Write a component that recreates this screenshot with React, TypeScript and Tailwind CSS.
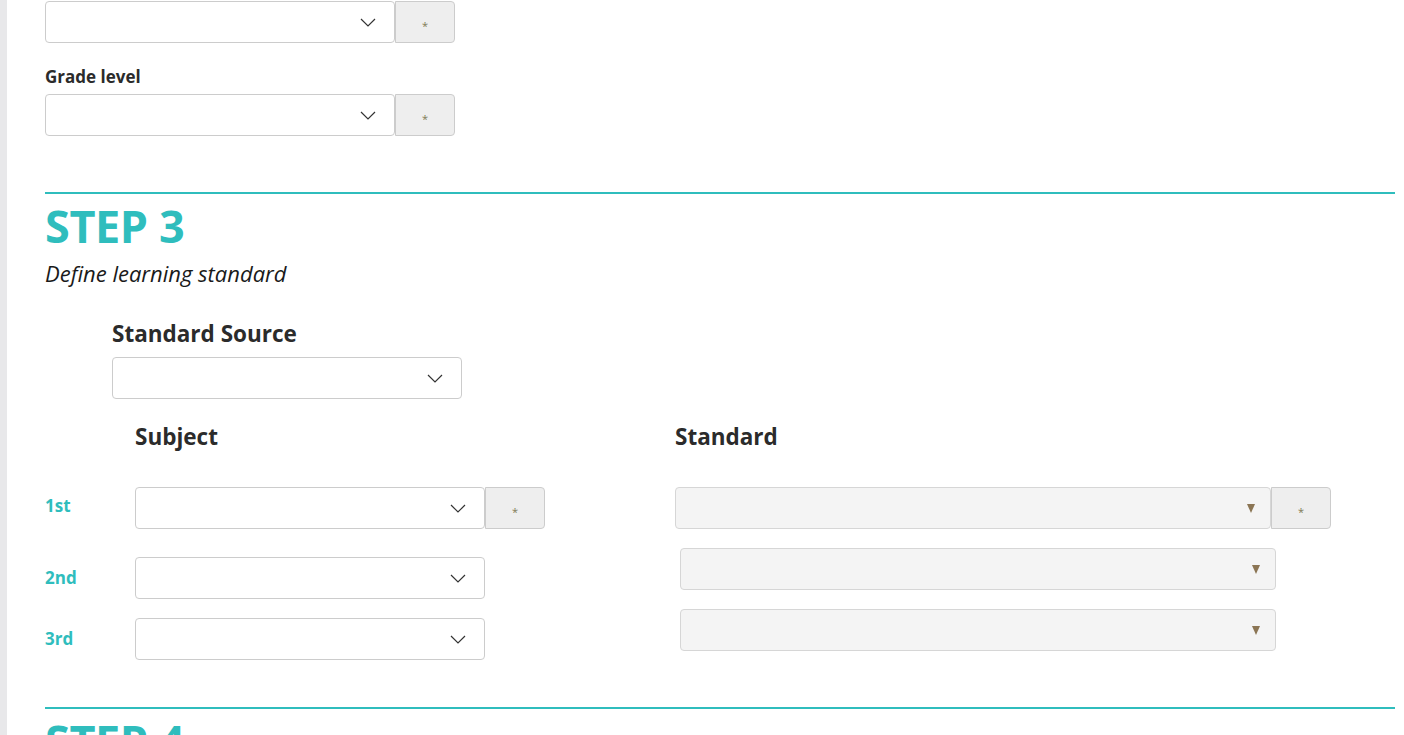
import React from "react";

const font = { fontFamily: '"Open Sans", "Noto Sans", sans-serif' };

function Chevron() {
  return (
    <svg width="16" height="9" viewBox="0 0 16 9" className="shrink-0">
      <polyline points="1,1 8,8 15,1" fill="none" stroke="#333" strokeWidth="1.2" />
    </svg>
  );
}

function Select({ w = "w-[350px]" }: { w?: string }) {
  return (
    <div className={`${w} h-[42px] bg-white border border-[#cccccc] rounded-[4px] flex items-center justify-end pr-[18px]`}>
      <Chevron />
    </div>
  );
}

function Star() {
  return (
    <div className="w-[60px] h-[42px] bg-[#eeeeee] border border-[#cccccc] rounded-r-[4px] flex items-center justify-center pt-[6px]">
      <span className="text-[11px] leading-none text-[#7f7a55]">*</span>
    </div>
  );
}

function SelectWithStar() {
  return (
    <div className="flex">
      <Select />
      <Star />
    </div>
  );
}

function GraySelect({ withStar = false }: { withStar?: boolean }) {
  return (
    <div className="flex">
      <div className="w-[596px] h-[42px] bg-[#f4f4f4] border border-[#d6d6d6] rounded-[4px] flex items-center justify-end pr-[15px]">
        <svg width="8" height="9" viewBox="0 0 8 9">
          <polygon points="0,0 8,0 4,9" fill="#8b7554" />
        </svg>
      </div>
      {withStar && <Star />}
    </div>
  );
}

export default function App() {
  return (
    <div className="flex h-[735px] overflow-hidden bg-white text-[#2b2b2b]" style={font}>
      <div className="w-[7px] shrink-0 bg-[#e8e8ea]" />
      <div className="flex-1 pl-[38px] pr-[9px] pt-px">
        <SelectWithStar />
        <div className="mt-[24px] mb-[7px] text-[17px] leading-[20px] font-bold">Grade level</div>
        <SelectWithStar />

        <div className="mt-[56px] h-[2px] bg-[#2fbdbd]" />
        <div className="mt-[4px] text-[45px] leading-[55px] font-bold tracking-[-0.4px] text-[#2fbdbd]">STEP 3</div>
        <div className="mt-[6px] text-[22px] leading-[28px] italic text-[#1a1a1a]">Define learning standard</div>

        <div className="pl-[67px] mt-[33px]">
          <div className="text-[22.5px] leading-[28px] font-bold">Standard Source</div>
          <div className="mt-[9px]">
            <Select />
          </div>
        </div>

        <div className="flex mt-[24px]">
          <div className="w-[630px] shrink-0">
            <div className="pl-[90px] text-[22.5px] leading-[28px] font-bold">Subject</div>
            <div className="mt-[36px] flex items-center">
              <div className="w-[90px] text-[17px] font-bold text-[#2fbdbd] pb-[4px]">1st</div>
              <SelectWithStar />
            </div>
            <div className="mt-[28px] flex items-center">
              <div className="w-[90px] text-[17px] font-bold text-[#2fbdbd]">2nd</div>
              <Select />
            </div>
            <div className="mt-[19px] flex items-center">
              <div className="w-[90px] text-[17px] font-bold text-[#2fbdbd]">3rd</div>
              <Select />
            </div>
          </div>
          <div className="flex-1">
            <div className="text-[22.5px] leading-[28px] font-bold">Standard</div>
            <div className="mt-[36px]">
              <GraySelect withStar />
            </div>
            <div className="mt-[19px] pl-[5px]">
              <GraySelect />
            </div>
            <div className="mt-[19px] pl-[5px]">
              <GraySelect />
            </div>
          </div>
        </div>

        <div className="mt-[47px] h-[2px] bg-[#2fbdbd]" />
        <div className="mt-[4px] text-[45px] leading-[55px] font-bold tracking-[-0.4px] text-[#2fbdbd]">STEP 4</div>
      </div>
    </div>
  );
}
